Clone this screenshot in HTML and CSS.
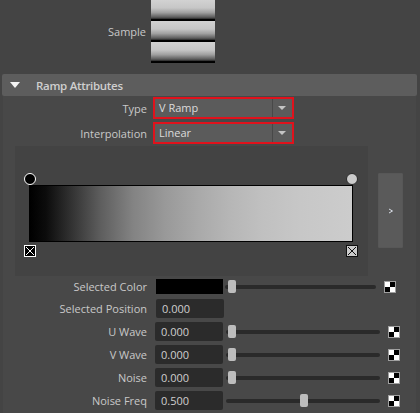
FILE: index.html
```html
<!DOCTYPE html>
<html lang="en">
  <head>
    <meta charset="UTF-8" />
    <title>Ramp</title>
    <link rel="stylesheet" href="styles.css">
  </head>
  <body>
    <div class="sample-row">
      <span class="sample-label">Sample</span>
      <div class="swatches">
        <div class="swatch"></div>
        <div class="swatch"></div>
        <div class="swatch"></div>
      </div>
    </div>

    <section class="frame">
      <div class="frame-header"><span class="caret"></span>Ramp Attributes</div>
      <div class="frame-body">
        <div class="row row-type">
          <span class="label">Type</span>
          <div class="dropdown highlight">
            <span class="dropdown-text">V Ramp</span>
            <span class="dropdown-arrow"></span>
          </div>
        </div>
        <div class="row row-interp">
          <span class="label">Interpolation</span>
          <div class="dropdown highlight">
            <span class="dropdown-text">Linear</span>
            <span class="dropdown-arrow"></span>
          </div>
        </div>

        <div class="ramp-row">
          <div class="ramp-panel">
            <div class="ramp-bar">
              <span class="stop-circle stop-dark" style="left: 0%"></span>
              <span class="stop-circle stop-light" style="left: 100%"></span>
              <span class="stop-delete" style="left: 0%">
                <svg width="12" height="12" viewBox="0 0 12 12">
                  <rect x="0.5" y="0.5" width="11" height="11" fill="#000" stroke="#fff" />
                  <path d="M2 2 L10 10 M10 2 L2 10" stroke="#fff" stroke-width="1" />
                </svg>
              </span>
              <span class="stop-delete" style="left: 100%">
                <svg width="12" height="12" viewBox="0 0 12 12">
                  <rect x="0.5" y="0.5" width="11" height="11" fill="#cbcbcb" stroke="#111" />
                  <path d="M2 2 L10 10 M10 2 L2 10" stroke="#111" stroke-width="1" />
                </svg>
              </span>
            </div>
          </div>
          <button class="expand-btn">
            <svg width="6" height="6" viewBox="0 0 6 6">
              <path d="M1 1 L4.5 3 L1 5" fill="none" stroke="#d8dde6" stroke-width="1" />
            </svg>
          </button>
        </div>

        <div class="row attr-row row-color">
          <span class="label">Selected Color</span>
          <div class="color-box"></div>
          <div class="slider slider-short"><span class="handle" style="left: 3px"></span></div>
          <span class="map-btn"></span>
        </div>
        <div class="row attr-row row-pos">
          <span class="label">Selected Position</span>
          <div class="field field-wide">0.000</div>
        </div>
        <div class="row attr-row">
          <span class="label">U Wave</span>
          <div class="field">0.000</div>
          <div class="slider"><span class="handle" style="left: 2px"></span></div>
          <span class="map-btn"></span>
        </div>
        <div class="row attr-row">
          <span class="label">V Wave</span>
          <div class="field">0.000</div>
          <div class="slider"><span class="handle" style="left: 2px"></span></div>
          <span class="map-btn"></span>
        </div>
        <div class="row attr-row">
          <span class="label">Noise</span>
          <div class="field">0.000</div>
          <div class="slider"><span class="handle" style="left: 2px"></span></div>
          <span class="map-btn"></span>
        </div>
        <div class="row attr-row">
          <span class="label">Noise Freq</span>
          <div class="field">0.500</div>
          <div class="slider"><span class="handle" style="left: 74px"></span></div>
          <span class="map-btn"></span>
        </div>
      </div>
    </section>
  </body>
</html>
```

FILE: styles.css
```css
body {
  margin: 0;
  width: 420px;
  height: 413px;
  overflow: hidden;
  background-color: #444444;
  font-family: "Open Sans", "Liberation Sans", sans-serif;
  font-size: 11px;
  color: #c8c8c8;
}

/* sample swatches */
.sample-row {
  display: flex;
  align-items: center;
  height: 63px;
}
.sample-label {
  width: 146px;
  text-align: right;
}
.swatches {
  display: flex;
  flex-direction: column;
  margin-left: 5px;
}
.swatch {
  width: 64px;
  height: 21px;
  background: linear-gradient(
    to bottom,
    #d2d2d2 0%,
    #c6c6c6 38%,
    #a0a0a0 60%,
    #5c5c5c 82%,
    #2a2a2a 90%,
    #000 93%,
    #000 100%
  );
}

/* collapsible frame */
.frame {
  margin: 11px 3px 0 2px;
}
.frame-header {
  display: flex;
  align-items: center;
  height: 22px;
  background-color: #5d5d5d;
  border-radius: 2px;
  font-weight: 600;
  font-size: 11.5px;
  letter-spacing: -0.3px;
  color: #cfcfcf;
}
.caret {
  width: 0;
  height: 0;
  border-left: 5.5px solid transparent;
  border-right: 5.5px solid transparent;
  border-top: 6px solid #f4f4f4;
  margin: 0 16px 0 8px;
}
.frame-body {
  margin: 0 1px;
  padding-top: 1px;
  background-color: #484848;
  height: 320px;
}

.row {
  display: flex;
  align-items: center;
}
.label {
  width: 144px;
  text-align: right;
  flex-shrink: 0;
}

/* dropdowns */
.row-interp {
  margin-top: 3px;
}
.dropdown {
  display: flex;
  align-items: stretch;
  width: 141px;
  height: 22px;
  margin-left: 6px;
  box-sizing: border-box;
  background-color: #5b5b5b;
  color: #dcdcdc;
}
.highlight {
  border: 2px solid #e0121c;
}
.dropdown-text {
  flex: 1;
  padding-left: 4px;
  line-height: 18px;
}
.dropdown-arrow {
  width: 19px;
  border-left: 1px solid #484848;
  position: relative;
}
.dropdown-arrow::after {
  content: "";
  position: absolute;
  left: 5px;
  top: 7px;
  border-left: 4.5px solid transparent;
  border-right: 4.5px solid transparent;
  border-top: 4px solid #c4c4c4;
}

/* ramp editor */
.ramp-row {
  display: flex;
  margin-top: 2px;
}
.ramp-panel {
  width: 353px;
  height: 130px;
  margin-left: 12px;
  padding-top: 39px;
  box-sizing: border-box;
  background-color: #434343;
}
.ramp-bar {
  position: relative;
  width: 324px;
  height: 57px;
  margin-left: 14px;
  box-sizing: border-box;
  border: 1px solid #000;
  background: linear-gradient(
    to right,
    #000 0%,
    #0c0c0c 5%,
    #2e2e2e 12%,
    #5e5e5e 22%,
    #838383 32%,
    #999999 42%,
    #a9a9a9 52%,
    #b6b6b6 62%,
    #c0c0c0 72%,
    #c7c7c7 84%,
    #cccccc 100%
  );
}
.stop-circle {
  position: absolute;
  top: -13px;
  width: 12px;
  height: 12px;
  box-sizing: border-box;
  border-radius: 50%;
  transform: translateX(-50%);
}
.stop-dark {
  background-color: #000;
  border: 1px solid #fff;
}
.stop-light {
  background-color: #cbcbcb;
  border: 1px solid #2a2a2a;
}
.stop-delete {
  position: absolute;
  top: calc(100% + 4px);
  width: 12px;
  height: 12px;
  transform: translateX(-50%);
}
.stop-delete svg {
  display: block;
}
.expand-btn {
  width: 25px;
  height: 75px;
  margin: 27px 0 0 10px;
  padding: 0;
  border: 1px solid #575757;
  border-radius: 1px;
  background-color: #5a5a5a;
  display: flex;
  align-items: center;
  justify-content: center;
}

/* attribute rows */
.attr-row {
  margin-top: 4px;
}
.row-color {
  margin-top: 3px;
  height: 15px;
}
.row-pos {
  margin-top: 5px;
}
.attr-row + .attr-row:nth-child(5) {
  margin-top: 5px;
}
.color-box {
  width: 67px;
  height: 15px;
  margin-left: 9px;
  background-color: #000;
}
.field {
  width: 68px;
  height: 19px;
  margin-left: 8px;
  padding-left: 6px;
  box-sizing: border-box;
  border-radius: 2px;
  background-color: #2b2b2b;
  color: #cfcfcf;
  line-height: 19px;
}
.field-wide {
  margin-left: 9px;
}
.slider {
  position: relative;
  width: 154px;
  height: 13px;
  margin-left: 3px;
}
.slider::before {
  content: "";
  position: absolute;
  left: 0;
  right: 0;
  top: 5px;
  height: 4px;
  border-radius: 2px;
  background-color: #2a2a2a;
}
.slider-short {
  width: 151px;
  margin-left: 2px;
}
.handle {
  position: absolute;
  top: 0;
  width: 8px;
  height: 13px;
  border-radius: 2px;
  background-color: #bdbdbd;
}
.map-btn {
  width: 12px;
  height: 12px;
  margin-left: 8px;
  box-sizing: border-box;
  border: 1px solid #a0a0a0;
  background: conic-gradient(#000 0 25%, #fff 0 50%, #000 0 75%, #fff 0);
}
```
